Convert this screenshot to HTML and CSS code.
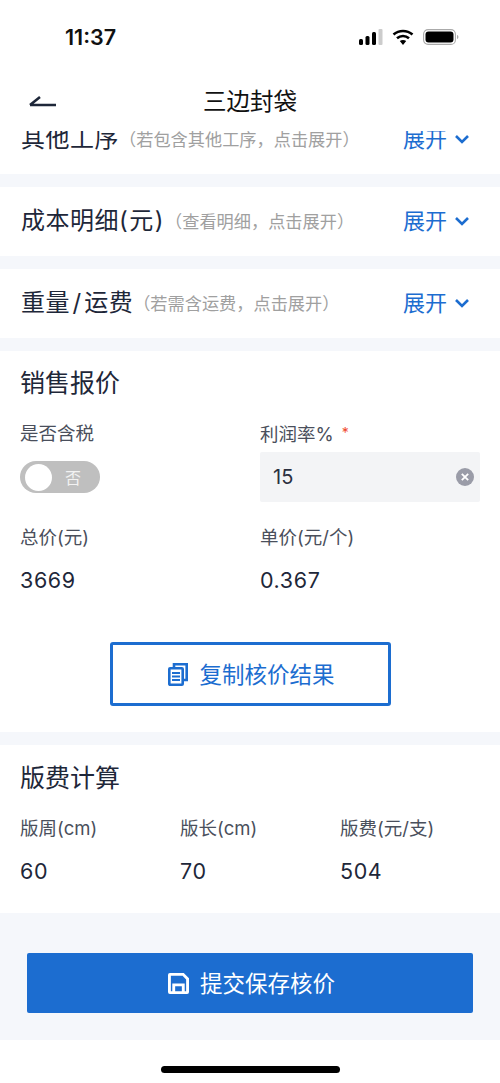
FILE: index.html
```html
<!DOCTYPE html>
<html lang="zh">
<head>
<meta charset="utf-8">
<title>三边封袋</title>
<link rel="stylesheet" href="styles.css">
</head>
<body>
<div class="statusbar">
  <span class="time">11:37</span>
  <div class="status-icons">
    <svg class="i-signal" viewBox="0 0 24 16"><rect x="0" y="10" width="4" height="6" rx="1.5" fill="#000"/><rect x="6.500" y="7" width="4" height="9" rx="1.500" fill="#000"/><rect x="13" y="3" width="4" height="13" rx="1.500" fill="#000"/><rect x="19.500" y="0" width="4" height="16" rx="1" fill="#ccc"/></svg>
    <svg class="i-wifi" viewBox="0 0 22 16"><path d="M1.500 5.500C7 .8 15 .8 20.500 5.500" fill="none" stroke="#000" stroke-width="2.600"/><path d="M5 9.200c3.500-3 8.500-3 12 0" fill="none" stroke="#000" stroke-width="2.600"/><path d="M7.800 12 11 16l3.200-4c-1.900-1.500-4.500-1.500-6.400 0z" fill="#000"/></svg>
    <svg class="i-batt" viewBox="0 0 36 16"><rect x=".6" y=".6" width="31.800" height="14.800" rx="4.500" fill="none" stroke="#aaa" stroke-width="1.100"/><rect x="2.500" y="2.500" width="28" height="11" rx="3" fill="#000"/><path d="M34 6v4c.9-.3 1.400-1 1.400-2s-.5-1.700-1.400-2z" fill="#aaa"/></svg>
  </div>
</div>
<header class="navbar">
  <svg class="i-back" viewBox="0 0 28 14"><path d="M1 11H27M1 11 11 3" fill="none" stroke="#1e2739" stroke-width="2.600"/></svg>
  <h1 class="nav-title">三边封袋</h1>
</header>
<main class="content">
  <section class="row row-first">
    <div class="row-text"><span class="row-title">其他工序</span><span class="row-hint">（若包含其他工序，点击展开）</span></div>
    <div class="expand"><span>展开</span><svg class="i-chev" viewBox="0 0 16 10"><path d="M2 2l6 6 6-6" fill="none" stroke="#1c6dd0" stroke-width="2.600"/></svg></div>
  </section>
  <section class="row">
    <div class="row-text"><span class="row-title">成本明细<span class="paren">(元)</span></span><span class="row-hint">（查看明细，点击展开）</span></div>
    <div class="expand"><span>展开</span><svg class="i-chev" viewBox="0 0 16 10"><path d="M2 2l6 6 6-6" fill="none" stroke="#1c6dd0" stroke-width="2.600"/></svg></div>
  </section>
  <section class="row">
    <div class="row-text"><span class="row-title">重量<span class="slash">/</span>运费</span><span class="row-hint">（若需含运费，点击展开）</span></div>
    <div class="expand"><span>展开</span><svg class="i-chev" viewBox="0 0 16 10"><path d="M2 2l6 6 6-6" fill="none" stroke="#1c6dd0" stroke-width="2.600"/></svg></div>
  </section>
  <section class="card card-sale">
    <h2 class="card-title">销售报价</h2>
    <div class="grid-2">
      <div class="field">
        <div class="label">是否含税</div>
        <div class="switch"><span class="knob"></span><span class="switch-text">否</span></div>
      </div>
      <div class="field">
        <div class="label">利润率%<span class="req">*</span></div>
        <div class="input"><span>15</span>
          <svg class="i-clear" viewBox="0 0 18 18"><circle cx="9" cy="9" r="9" fill="#9a9ca8"/><path d="M5.800 5.800l6.400 6.400M12.200 5.800l-6.400 6.400" stroke="#fff" stroke-width="1.800"/></svg>
        </div>
      </div>
      <div class="field">
        <div class="label">总价(元)</div>
        <div class="value">3669</div>
      </div>
      <div class="field">
        <div class="label">单价(元/个)</div>
        <div class="value">0.367</div>
      </div>
    </div>
    <button class="btn-outline">
      <svg class="i-copy" viewBox="0 0 20 23"><path d="M6 4V1.300H18.700V17H16" fill="none" stroke="#1c6dd0" stroke-width="2.600"/><rect x="1.300" y="5.300" width="13.400" height="16.400" rx=".8" fill="#fff" stroke="#1c6dd0" stroke-width="2.600"/><path d="M4 10h8M4 13.500h8M4 17h8" stroke="#1c6dd0" stroke-width="1.800"/></svg>
      <span class="btn-label">复制核价结果</span>
    </button>
  </section>
  <section class="card card-plate">
    <h2 class="card-title">版费计算</h2>
    <div class="grid-3">
      <div class="field"><div class="label">版周(cm)</div><div class="value">60</div></div>
      <div class="field"><div class="label">版长(cm)</div><div class="value">70</div></div>
      <div class="field"><div class="label">版费(元/支)</div><div class="value">504</div></div>
    </div>
  </section>
  <div class="footer">
    <button class="btn-primary">
      <svg class="i-save" viewBox="0 0 22 22"><path fill-rule="evenodd" d="M2 0h14.500L22 5.500V20a2 2 0 0 1-2 2H2a2 2 0 0 1-2-2V2a2 2 0 0 1 2-2zm1 3v16h1.500v-8h13v8H19V6.700L15.300 3zM7.500 14v5h7v-5z" fill="#fff"/></svg>
      <span class="btn-label">提交保存核价</span>
    </button>
  </div>
</main>
<div class="home-area"><span class="home-bar"></span></div>
</body>
</html>
```

FILE: styles.css
```css
* { box-sizing: border-box; }
html, body { margin: 0; padding: 0; }
body {
  width: 500px;
  height: 1083px;
  overflow: hidden;
  background: #fff;
  font-family: Inter, "Noto Sans CJK SC", sans-serif;
  color: #1e2739;
  text-spacing-trim: space-all;
}
.statusbar {
  height: 68px;
  display: flex;
  justify-content: space-between;
  align-items: center;
  padding: 6px 41px 0 65px;
}
.time { font-size: 21.500px; font-weight: 600; color: #111; }
.status-icons { display: flex; align-items: center; gap: 9px; }
.i-signal { width: 24px; height: 16px; }
.i-wifi { width: 22px; height: 16px; }
.i-batt { width: 36px; height: 16px; }
.navbar {
  height: 63px;
  display: flex;
  align-items: flex-start;
  justify-content: center;
  position: relative;
  background: #fff;
  padding-top: 18px;
}
.i-back { position: absolute; left: 29px; top: 26px; width: 28px; height: 14px; }
.nav-title { margin: 0; font-size: 23.500px; line-height: 32px; font-weight: 400; color: #111; }
.content { background: #f5f7fb; height: 909px; overflow: hidden; }
.row {
  height: 69px;
  margin-bottom: 13px;
  background: #fff;
  display: flex;
  align-items: center;
  justify-content: space-between;
  padding: 0 30px 6px 21px;
}
.row-first { margin-top: -26px; }
.row-text { display: flex; align-items: center; }
.row-title { font-size: 24px; letter-spacing: .5px; color: #1e2739; }
.paren { letter-spacing: 1.500px; }
.slash { margin: 0 2.500px; }
.row-hint { font-size: 17.200px; color: #a0a0a0; margin-top: 3px; }
.expand { display: flex; align-items: center; gap: 7px; color: #1c6dd0; font-size: 22px; }
.i-chev { width: 16px; height: 10px; margin-top: 5px; }
.card { background: #fff; padding: 0 20px; margin-bottom: 13px; }
.card-sale { height: 381px; padding-top: 14px; }
.card-plate { height: 168px; padding-top: 15px; margin-bottom: 0; }
.card-title { margin: 0; font-size: 25px; line-height: 36px; font-weight: 400; color: #1e2739; }
.grid-2 { display: grid; grid-template-columns: 240px 220px; margin-top: 18px; }
.grid-3 { display: grid; grid-template-columns: 160px 160px 140px; margin-top: 18px; }
.field { min-width: 0; }
.label { font-size: 18.500px; line-height: 28px; color: #4a4f5c; }
.req { color: #f0492e; font-size: 14px; margin-left: 8px; vertical-align: 3px; }
.switch {
  width: 80px;
  height: 32px;
  margin-top: 14px;
  border-radius: 16px;
  background: #bfbfbf;
  display: flex;
  align-items: center;
  padding-left: 5px;
}
.knob { width: 27px; height: 27px; border-radius: 50%; background: #fff; }
.switch-text { color: #f2f2f2; font-size: 16px; margin-left: 13px; }
.input {
  height: 50px;
  margin-top: 4px;
  background: #f3f4f6;
  border-radius: 2px;
  display: flex;
  align-items: center;
  justify-content: space-between;
  padding: 0 6px 0 13px;
  font-size: 20px;
  color: #2a3040;
}
.i-clear { width: 18px; height: 18px; }
.grid-2 .field:nth-child(n+3) { margin-top: 21px; }
.value { font-size: 21.500px; line-height: 30px; margin-top: 14px; color: #1e2739; letter-spacing: .6px; }
.btn-outline, .btn-primary {
  display: flex;
  align-items: center;
  justify-content: center;
  font-family: inherit;
  font-size: 22.500px;
  font-weight: 400;
  border-radius: 2px;
  padding: 0 0 0 3px;
}
.btn-label { margin-top: -3px; }
.btn-outline {
  width: 281px;
  height: 64px;
  margin: 47px auto 0;
  gap: 11px;
  background: #fff;
  border: 3px solid #1c6dd0;
  border-radius: 3px;
  color: #1c6dd0;
}
.i-copy { width: 20px; height: 23px; }
.footer { height: 127px; background: #f5f7fb; padding: 40px 27px 0; }
.btn-primary {
  width: 446px;
  height: 60px;
  gap: 11px;
  border: 0;
  background: #1c6dd0;
  color: #fff;
}
.i-save { width: 21px; height: 21px; }
.home-area { height: 43px; background: #fff; display: flex; justify-content: center; padding-top: 26px; }
.home-bar { width: 179px; height: 7px; border-radius: 4px; background: #000; }
```
